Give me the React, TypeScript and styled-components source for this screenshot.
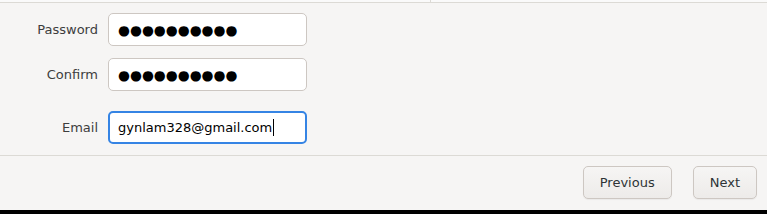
import React from 'react';
import styled, { createGlobalStyle } from 'styled-components';

const GlobalStyle = createGlobalStyle`
  html, body {
    margin: 0;
    padding: 0;
    background: #000;
  }
  body {
    font-family: 'DejaVu Sans', 'Liberation Sans', sans-serif;
    font-size: 13px;
    color: #2e3436;
  }
`;

const App: React.FC = () => (
  <>
    <GlobalStyle />
    <Window>
      <TopStrip>
        <StripDivider />
      </TopStrip>
      <Form>
        <Label>Password</Label>
        <Field>
          <Dots>●●●●●●●●●●</Dots>
        </Field>
        <Label>Confirm</Label>
        <Field>
          <Dots>●●●●●●●●●●</Dots>
        </Field>
        <Label $spaced>Email</Label>
        <Field $focused $spaced>
          gynlam328@gmail.com
          <Caret />
        </Field>
      </Form>
      <Footer>
        <Button>Previous</Button>
        <Button>Next</Button>
      </Footer>
    </Window>
  </>
);

export default App;

const Window = styled.div`
  height: 210px;
  background: #f6f5f4;
  display: flex;
  flex-direction: column;
`;
const TopStrip = styled.div`
  height: 2px;
  background: #fafafa;
  border-bottom: 1px solid #dcdad5;
  display: flex;
`;
const StripDivider = styled.div`
  width: 1px;
  margin-left: 430px;
  background: #dcdad5;
`;
const Form = styled.div`
  display: grid;
  grid-template-columns: 98px 199px;
  column-gap: 10px;
  row-gap: 12px;
  margin-top: 10px;
  padding-bottom: 11px;
  border-bottom: 1px solid #dcdad5;
`;
const Label = styled.div<{ $spaced?: boolean }>`
  display: flex;
  align-items: center;
  justify-content: flex-end;
  color: #3d3d3d;
  margin-top: ${(p) => (p.$spaced ? '8px' : '0')};
`;
const Field = styled.div<{ $focused?: boolean; $spaced?: boolean }>`
  box-sizing: border-box;
  height: 33px;
  display: flex;
  align-items: center;
  background: #fff;
  border-radius: 5px;
  border: ${(p) => (p.$focused ? '2px solid #3584e4' : '1px solid #cdc7c2')};
  padding-left: ${(p) => (p.$focused ? '8px' : '9px')};
  margin-top: ${(p) => (p.$spaced ? '8px' : '0')};
  color: #000;
  white-space: nowrap;
`;
const Dots = styled.span`
  font-size: 13.7px;
`;
const Caret = styled.span`
  display: inline-block;
  width: 1px;
  height: 17px;
  background: #000;
  margin-left: 1px;
`;
const Footer = styled.div`
  display: flex;
  justify-content: flex-end;
  gap: 21px;
  padding: 10px 10px 0 0;
`;
const Button = styled.button`
  box-sizing: border-box;
  height: 33px;
  padding: 0 16px;
  font-family: inherit;
  font-size: 13px;
  color: #2e3436;
  border: 1px solid #cdc7c2;
  border-radius: 5px;
  background: linear-gradient(#f6f5f4, #edebe9);
  box-shadow: 0 1px 1px rgba(0, 0, 0, 0.05);
`;
